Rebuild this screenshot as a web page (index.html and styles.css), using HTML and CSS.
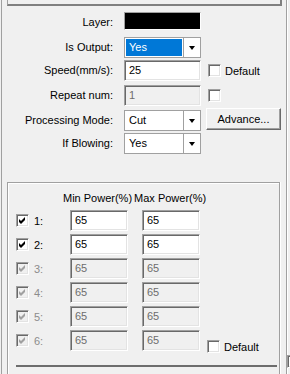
FILE: index.html
```html
<!DOCTYPE html>
<html lang="en">
<head>
    <meta charset="UTF-8">
    <meta name="viewport" content="width=device-width, initial-scale=1.0">
    <link rel="stylesheet" href="styles.css">
    <title>Layer Parameters</title>
</head>
<body>
    <div id="panel">
        <div class="top-frame"></div>

        <div class="props">
            <label class="lbl">Layer:</label>
            <div class="swatch"></div>
            <div></div>

            <label class="lbl">Is Output:</label>
            <div class="combo"><span class="value selected">Yes</span><span class="drop"><i class="arrow"></i></span></div>
            <div></div>

            <label class="lbl">Speed(mm/s):</label>
            <div class="field">25</div>
            <div class="check-wrap"><span class="chk"></span><span>Default</span></div>

            <label class="lbl">Repeat num:</label>
            <div class="field disabled">1</div>
            <div class="check-wrap"><span class="chk"></span></div>

            <label class="lbl">Processing Mode:</label>
            <div class="combo"><span class="value">Cut</span><span class="drop"><i class="arrow"></i></span></div>
            <div><button class="btn">Advance...</button></div>

            <label class="lbl">If Blowing:</label>
            <div class="combo"><span class="value">Yes</span><span class="drop"><i class="arrow"></i></span></div>
            <div></div>
        </div>

        <div class="group">
            <div class="power-head">
                <span>Min Power(%)</span>
                <span>Max Power(%)</span>
            </div>
            <div class="power-grid" id="powerGrid"></div>
            <div class="separator"></div>
        </div>

        <span class="chk edge-chk"></span>
    </div>

    <script>
        // six laser tubes, only the first two are enabled
        const tick = '<svg width="9" height="9" viewBox="0 0 9 9"><polygon points="1,3 3,5 7,1 7,4 3,8 1,6"/></svg>';
        const grid = document.getElementById('powerGrid');
        let html = '';
        for (let i = 1; i <= 6; i++) {
            const off = i > 2 ? ' disabled' : '';
            html += `
                <span class="chk checked${off}">${tick}</span>
                <span class="num${off}">${i}:</span>
                <div class="field small${off}">65</div>
                <div class="field small${off}">65</div>
                <div class="check-wrap">${i === 6 ? '<span class="chk"></span><span>Default</span>' : ''}</div>
            `;
        }
        grid.innerHTML = html;
    </script>
</body>
</html>
```

FILE: styles.css
```css
body {
    margin: 0;
    background-color: #f0f0f0;
    font-family: "Liberation Sans", Arial, sans-serif;
    font-size: 11px;
    color: #000;
    width: 290px;
    height: 374px;
    overflow: hidden;
}

#panel {
    position: relative;
    margin-left: 1px;
    width: 284px;
    height: 374px;
    border-left: 1px solid #a0a0a0;
    border-right: 1px solid #a0a0a0;
    box-shadow: 1px 0 0 #fff;
}

.top-frame {
    margin-left: 5px;
    width: 272px;
    height: 4px;
    border-left: 1px solid #a0a0a0;
    border-right: 2px solid #808080;
    border-bottom: 2px solid #808080;
}

.props {
    display: grid;
    grid-template-columns: 122px 77px auto;
    grid-template-rows: 25px 23px 25px 25px 23px 21px;
    margin-top: 6px;
}

.lbl {
    text-align: right;
    padding-right: 11px;
    line-height: 20px;
}

.swatch {
    width: 77px;
    height: 18px;
    box-sizing: border-box;
    background-color: #000;
    border: 1px solid #a0a0a0;
    border-color: #a0a0a0 #fff #fff #a0a0a0;
}

.field {
    height: 21px;
    box-sizing: border-box;
    border: 1px solid;
    border-color: #a0a0a0 #fff #fff #a0a0a0;
    box-shadow: inset 1px 1px 0 #696969, inset -1px -1px 0 #e3e3e3;
    background-color: #fff;
    padding-left: 4px;
    line-height: 19px;
}

.field.disabled {
    background-color: #f0f0f0;
    color: #6d6d6d;
}

.field.small {
    width: 58px;
}

.combo {
    display: flex;
    height: 21px;
    box-sizing: border-box;
    border: 1px solid #a0a0a0;
    background-color: #fff;
}

.combo .value {
    flex: 1;
    margin: 1px;
    padding-left: 3px;
    line-height: 17px;
}

.combo .selected {
    background-color: #0078d7;
    color: #fff;
}

.drop {
    width: 16px;
    border-left: 1px solid #a0a0a0;
    display: flex;
    align-items: center;
    justify-content: center;
}

.arrow {
    width: 0;
    height: 0;
    border-top: 4px solid #000;
    border-left: 3.5px solid transparent;
    border-right: 3.5px solid transparent;
}

.check-wrap {
    display: flex;
    align-items: center;
    gap: 4px;
    height: 21px;
    padding-left: 7px;
}

.chk {
    display: inline-flex;
    align-items: center;
    justify-content: center;
    width: 13px;
    height: 13px;
    box-sizing: border-box;
    border: 1px solid;
    border-color: #a0a0a0 #fff #fff #a0a0a0;
    box-shadow: inset 1px 1px 0 #696969, inset -1px -1px 0 #e3e3e3;
    background-color: #fff;
}

.chk svg {
    fill: #000;
}

.chk.disabled {
    background-color: #f0f0f0;
}

.chk.disabled svg {
    fill: #a0a0a0;
}

.btn {
    display: block;
    margin: -2px 0 0 5px;
    width: 75px;
    height: 22px;
    padding: 0;
    font-family: inherit;
    font-size: 11px;
    color: #000;
    background-color: #f0f0f0;
    border: 1px solid;
    border-color: #fff #696969 #696969 #fff;
    box-shadow: inset -1px -1px 0 #a0a0a0;
}

.group {
    margin: 28px 0 0 5px;
    width: 273px;
    height: 200px;
    border: 1px solid #a0a0a0;
    border-bottom: none;
    box-shadow: inset 1px 1px 0 #fff, 1px 0 0 #fff;
    padding: 8px 0 0 8px;
    box-sizing: border-box;
}

.power-head {
    display: flex;
    gap: 2px;
    padding-left: 47px;
    line-height: 14px;
}

.power-grid {
    display: grid;
    grid-template-columns: 13px 41px 72px 65px auto;
    grid-auto-rows: 21px;
    row-gap: 3px;
    margin-top: 5px;
    align-items: center;
}

.num {
    padding-left: 5px;
}

.num.disabled {
    color: #8c8c8c;
}

.power-grid .check-wrap {
    padding-left: 0;
    align-self: start;
    margin-top: 6px;
}

.separator {
    margin-top: 14px;
    width: 261px;
    height: 2px;
    background-color: #6d6d6d;
}

.edge-chk {
    position: absolute;
    left: 285px;
    top: 355px;
}
```
